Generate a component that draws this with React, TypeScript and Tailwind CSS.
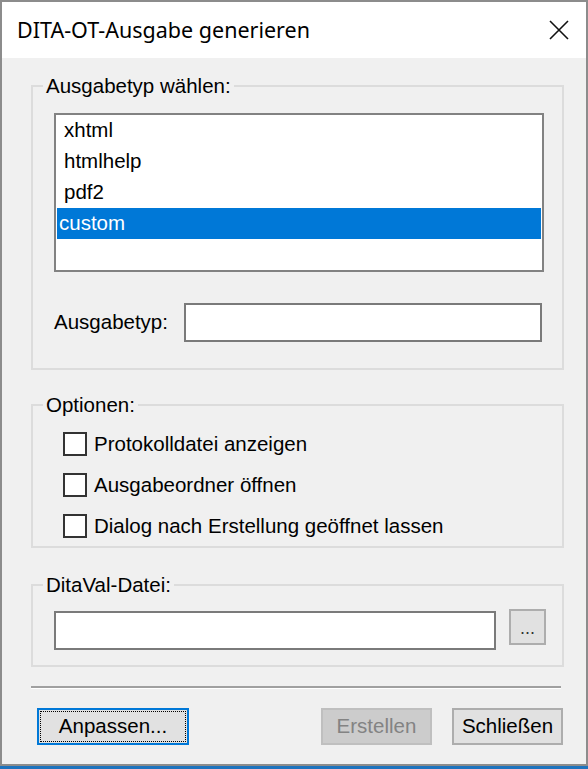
import React from "react";

const ui = "font-['Liberation_Sans',Arial,sans-serif] text-[20.5px] text-black";

function CheckRow({ label }: { label: string }) {
  return (
    <label className="flex h-[41px] items-center gap-[7px]">
      <span className="h-[24px] w-[24px] shrink-0 border-2 border-[#333333] bg-white" />
      <span className="leading-[24px]">{label}</span>
    </label>
  );
}

export default function App() {
  const types = ["xhtml", "htmlhelp", "pdf2", "custom"];
  const selected = "custom";

  return (
    <div className={`flex h-[769px] w-[588px] flex-col bg-[#f0f0f0] ${ui}`}>
      <div className="flex flex-1 flex-col border-2 border-[#8c8c8c]">
        {/* title bar */}
        <div className="flex h-[56px] shrink-0 items-center justify-between bg-white pl-[15px] pr-[17px]">
          <span className="font-['Noto_Sans','Open_Sans',sans-serif] text-[21.5px] leading-none text-black">
            DITA-OT-Ausgabe generieren
          </span>
          <svg width="20" height="20" viewBox="0 0 20 20" className="-mt-[1px]">
            <path d="M1 1 L19 19 M19 1 L1 19" stroke="#111" strokeWidth="1.6" fill="none" />
          </svg>
        </div>

        {/* dialog body */}
        <div className="flex flex-1 flex-col pl-[29px] pr-[22px] pt-[16px]">
          <fieldset className="border-2 border-[#dcdcdc]">
            <legend className="ml-[10px] px-[3px] leading-[24px]">Ausgabetyp wählen:</legend>
            <div className="pb-[26px] pl-[21px] pr-[18px] pt-[15px]">
              <div className="flex h-[159px] flex-col border-2 border-[#828282] bg-white">
                {types.map((t) =>
                  t === selected ? (
                    <div
                      key={t}
                      className="mx-[1px] flex h-[31px] items-center bg-[#0078d7] pl-[2px] text-white"
                    >
                      {t}
                    </div>
                  ) : (
                    <div key={t} className="flex h-[31px] items-center pl-[8px]">
                      {t}
                    </div>
                  )
                )}
              </div>
              <div className="mt-[31px] flex items-center pr-[2px]">
                <span className="w-[130px] shrink-0">Ausgabetyp:</span>
                <div className="h-[39px] flex-1 border-2 border-[#7a7a7a] bg-white" />
              </div>
            </div>
          </fieldset>

          <fieldset className="mt-[23px] border-2 border-[#dcdcdc]">
            <legend className="ml-[10px] px-[3px] leading-[24px]">Optionen:</legend>
            <div className="pl-[30px] pt-[6px]">
              <CheckRow label="Protokolldatei anzeigen" />
              <CheckRow label="Ausgabeordner öffnen" />
              <CheckRow label="Dialog nach Erstellung geöffnet lassen" />
            </div>
          </fieldset>

          <fieldset className="mt-[25px] border-2 border-[#dcdcdc]">
            <legend className="ml-[10px] px-[3px] leading-[24px]">DitaVal-Datei:</legend>
            <div className="flex items-start pb-[15px] pl-[21px] pt-[12px]">
              <div className="mt-[2px] h-[39px] w-[442px] border-2 border-[#7a7a7a] bg-white" />
              <button className="ml-[13px] flex h-[36px] w-[37px] items-end justify-center border-2 border-[#adadad] bg-[#e1e1e1] pb-[6px] text-[18px] leading-none text-[#333]">
                ...
              </button>
            </div>
          </fieldset>

          <div className="mr-[3px] mt-[19px] flex flex-col">
            <div className="h-[2px] bg-[#a0a0a0]" />
            <div className="h-[1px] bg-white" />
          </div>

          <div className="mt-[19px] flex items-center pr-[1px]">
            <button className="ml-[6px] flex h-[37px] w-[152px] border-2 border-[#0078d7] bg-[#e1e1e1] p-[1px]">
              <span className="flex flex-1 items-center justify-center border border-dotted border-black">
                Anpassen...
              </span>
            </button>
            <div className="flex-1" />
            <button
              disabled
              className="h-[37px] w-[111px] border-2 border-[#bfbfbf] bg-[#cccccc] text-[#838383]"
            >
              Erstellen
            </button>
            <button className="ml-[20px] h-[37px] w-[111px] border-2 border-[#adadad] bg-[#e1e1e1]">
              Schließen
            </button>
          </div>
        </div>
      </div>
      <div className="h-[3px] shrink-0 bg-[#1e73be]" />
    </div>
  );
}
